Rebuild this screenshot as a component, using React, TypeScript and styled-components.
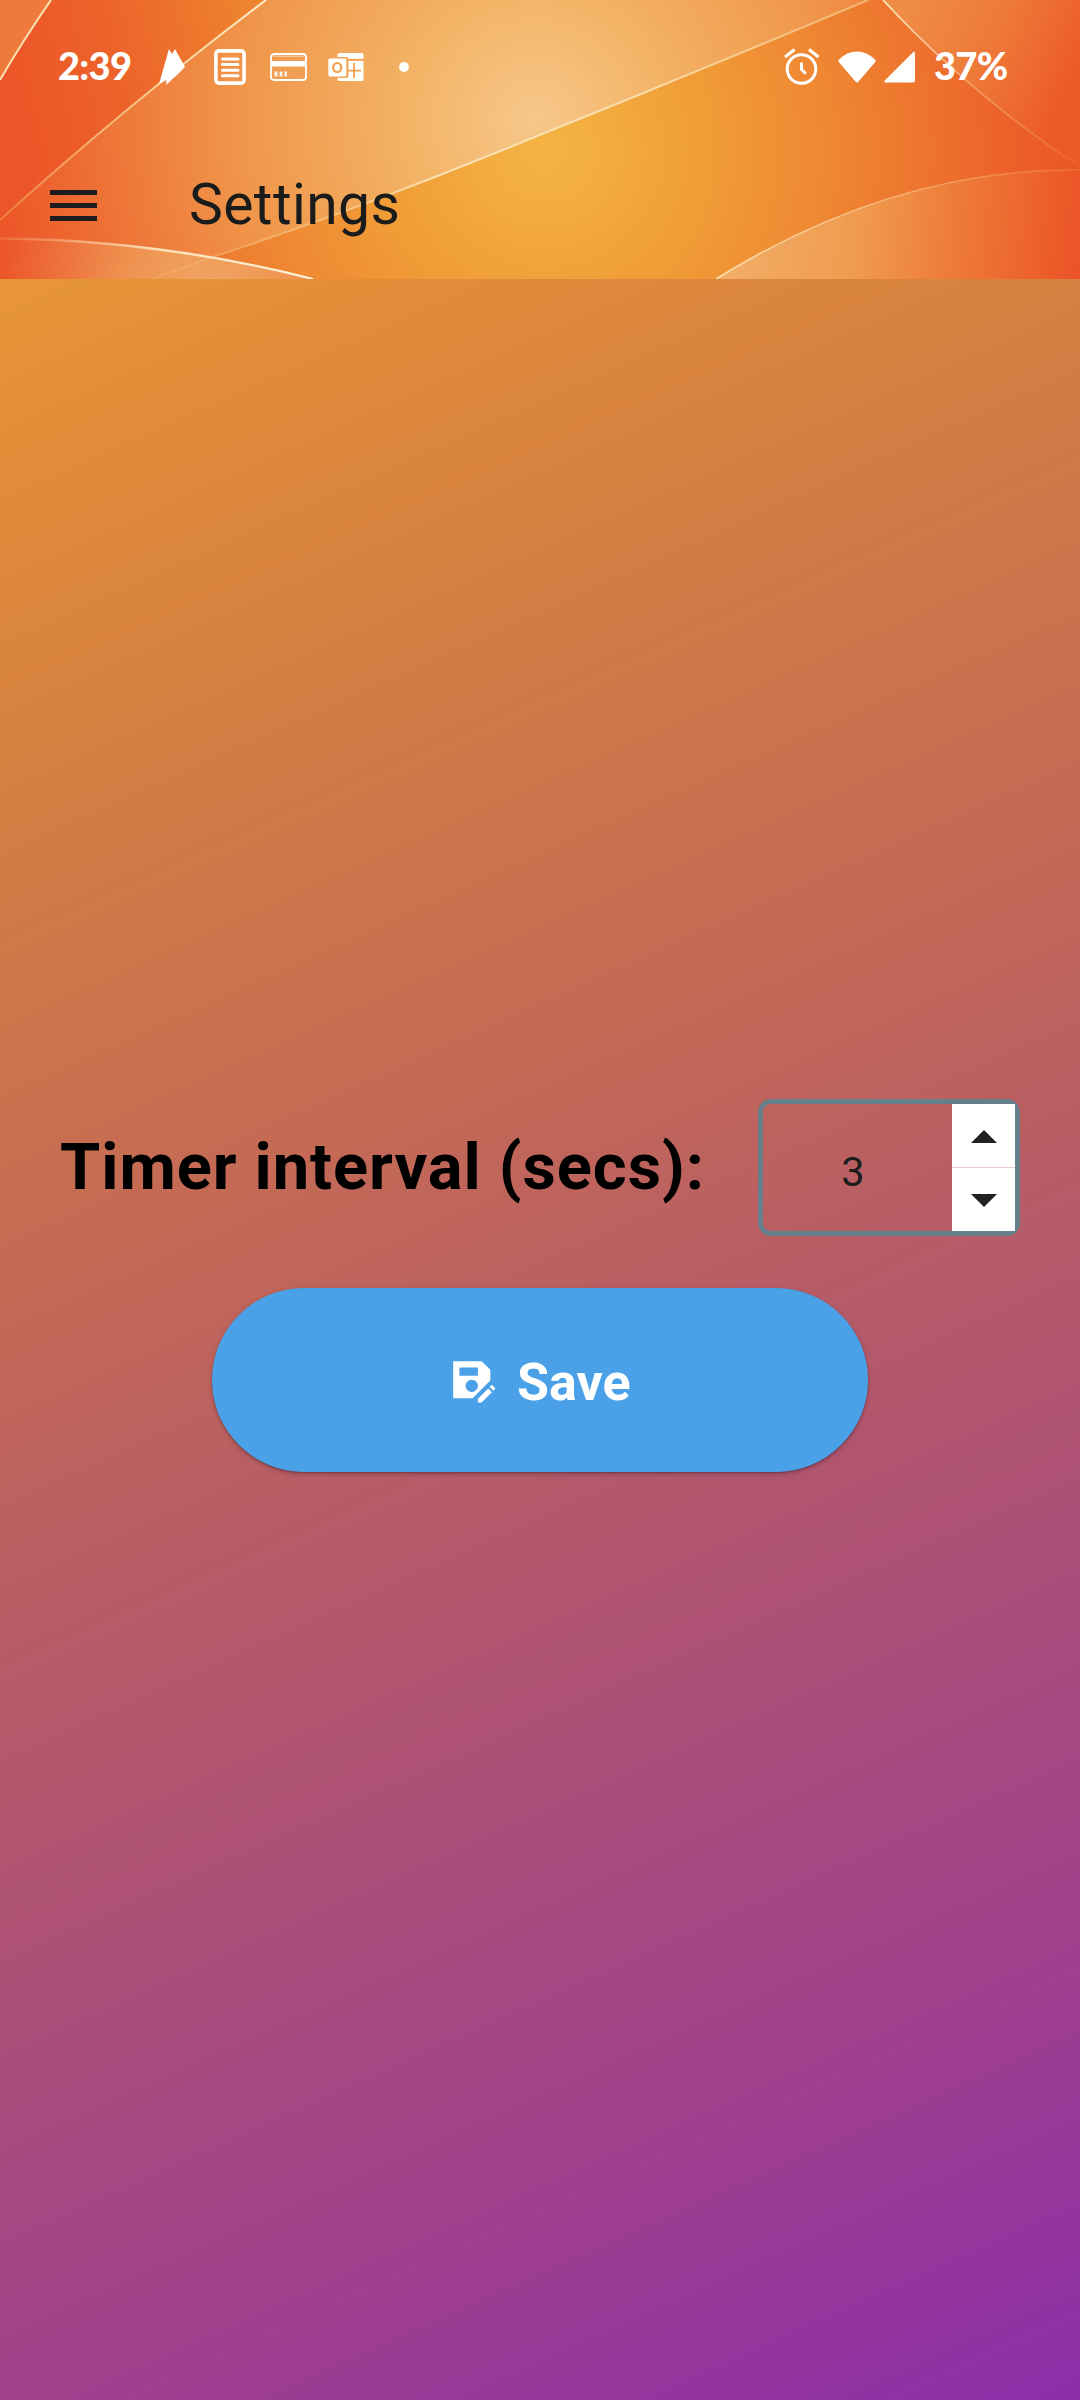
import React, { useState } from "react";
import styled, { createGlobalStyle } from "styled-components";

const GlobalStyle = createGlobalStyle`
  *, *::before, *::after { box-sizing: border-box; }
  html, body { margin: 0; padding: 0; }
  body { font-family: Roboto, "Noto Sans", sans-serif; }
`;

const Screen = styled.div`
  display: flex;
  flex-direction: column;
  width: 1080px;
  height: 2400px;
  overflow: hidden;
`;

const Header = styled.header`
  position: relative;
  flex: none;
  height: 279px;
  overflow: hidden;
  background: #ee7a30;
`;

const HeaderArt = styled.svg`
  position: absolute;
  inset: 0;
  display: block;
`;

const HeaderContent = styled.div`
  position: relative;
  display: flex;
  flex-direction: column;
  height: 100%;
`;

const StatusBar = styled.div`
  display: flex;
  align-items: center;
  justify-content: space-between;
  height: 133px;
  padding: 0 72px 0 58px;
  color: #fff;
`;

const StatusGroup = styled.div`
  display: flex;
  align-items: center;
`;

const StatusText = styled.span<{ $width: number }>`
  display: block;
  width: ${(p) => p.$width}px;
  margin-bottom: 3px;
  font-family: Lato, sans-serif;
  font-size: 38px;
  font-weight: 900;
  line-height: 46px;
  letter-spacing: -0.7px;
  white-space: nowrap;
`;

const Battery = styled.div`
  margin-left: 19px;
`;

const Glyph = styled.svg<{ $gap: number }>`
  display: block;
  flex: none;
  margin-left: ${(p) => p.$gap}px;
`;

const AppBar = styled.div`
  display: flex;
  align-items: center;
  flex: 1;
  padding: 0 50px;
`;

const MenuButton = styled.button`
  display: flex;
  flex-direction: column;
  justify-content: space-between;
  width: 47px;
  height: 31px;
  margin: 0 0 1px;
  padding: 0;
  border: 0;
  background: none;
`;

const MenuLine = styled.span`
  display: block;
  height: 5px;
  background: #1c1d1c;
`;

const Title = styled.h1`
  margin: 0 0 3px 92px;
  color: #1a1c1c;
  font-size: 57px;
  font-weight: 400;
  line-height: 66px;
  letter-spacing: 0.4px;
`;

const Body = styled.main`
  display: flex;
  flex: 1;
  flex-direction: column;
  align-items: center;
  padding-top: 820px;
  background: linear-gradient(
      155.77deg,
      #ee9c35 0%,
      #e89638 9.7%,
      #e08b39 17.5%,
      #d37d44 29%,
      #c46a55 44.5%,
      #b65b67 58%,
      #9f408d 84%,
      #8d2eaa 100%
    )
    0 100% / 1080px 2400px no-repeat;
`;

const FieldRow = styled.div`
  display: flex;
  align-items: center;
  justify-content: space-between;
  width: 100%;
  height: 137px;
  padding: 0 60px;
`;

const FieldLabel = styled.label`
  margin-bottom: 1px;
  color: #000;
  font-size: 65px;
  font-weight: 700;
  line-height: 76px;
  letter-spacing: 0.95px;
  white-space: nowrap;
`;

const Stepper = styled.div`
  display: flex;
  width: 262px;
  height: 137px;
  border: 5px solid #677f8b;
  border-radius: 13px;
`;

const StepperValue = styled.output`
  flex: 1;
  padding: 7px 9px 0 0;
  color: #1c1e1e;
  font-size: 41.5px;
  font-weight: 400;
  line-height: 121px;
  text-align: center;
`;

const StepperButtons = styled.div`
  display: grid;
  grid-template-rows: 1fr 1fr;
  gap: 1px;
  width: 63px;
  background: #e6cdd2;
`;

const StepButton = styled.button`
  display: flex;
  align-items: center;
  justify-content: center;
  padding: 1px 0 0;
  border: 0;
  background: #fff;
`;

const SaveButton = styled.button`
  display: flex;
  align-items: center;
  justify-content: center;
  width: 656px;
  height: 184px;
  margin-top: 52px;
  padding: 0 2px 0 0;
  border: 0;
  border-radius: 92px;
  background: #4aa1e8;
  box-shadow: 0 2px 4px rgba(0, 0, 0, 0.26), 0 1px 1px rgba(0, 0, 0, 0.16);
  color: #fff;
  font-family: Roboto, sans-serif;
  font-size: 52px;
  font-weight: 700;
  line-height: 60px;
`;

const SaveText = styled.span`
  margin: 6px 0 0 20px;
`;

const regionA = "M0 0H51Q22 42 0 80Z";
const regionBand = "M266 0Q126 106 0 220V239Q110 240 213 257L440 175Q654 90 868 0Z";
const lineC = "M152 279L213 257Q330 218 440 175Q654 90 868 0";
const regionE = "M0 238.500Q160 240 313 279H0Z";
const regionF = "M716 279Q895 168 1080 170V279Z";
const regionD = "M883 0Q970 94 1080 167V0Z";

function HeaderBackground() {
  return (
    <HeaderArt width="1080" height="279" viewBox="0 0 1080 279" aria-hidden="true">
      <defs>
        <radialGradient id="sun" gradientUnits="userSpaceOnUse" cx="545" cy="150" r="560">
          <stop offset="0" stopColor="#f4b444" />
          <stop offset="0.3" stopColor="#f09c37" />
          <stop offset="0.5" stopColor="#ef8833" />
          <stop offset="0.68" stopColor="#ed742e" />
          <stop offset="0.82" stopColor="#ec6229" />
          <stop offset="0.95" stopColor="#eb5627" />
        </radialGradient>
        <radialGradient id="band" gradientUnits="userSpaceOnUse" cx="535" cy="120" r="540">
          <stop offset="0" stopColor="#f6c78a" />
          <stop offset="0.25" stopColor="#f3b264" />
          <stop offset="0.55" stopColor="#f0964a" />
          <stop offset="0.78" stopColor="#ee7638" />
          <stop offset="1" stopColor="#ec5628" />
        </radialGradient>
        <linearGradient id="left" gradientUnits="userSpaceOnUse" x1="0" y1="60" x2="250" y2="0">
          <stop offset="0" stopColor="#ec5528" />
          <stop offset="0.45" stopColor="#ec642a" />
          <stop offset="1" stopColor="#ee842f" />
        </linearGradient>
        <radialGradient id="low" gradientUnits="userSpaceOnUse" cx="210" cy="290" r="210">
          <stop offset="0" stopColor="#f1a562" />
          <stop offset="0.4" stopColor="#ef9351" />
          <stop offset="1" stopColor="#ec5628" />
        </radialGradient>
        <linearGradient id="right" gradientUnits="userSpaceOnUse" x1="730" y1="260" x2="1075" y2="290">
          <stop offset="0" stopColor="#f2ad66" />
          <stop offset="0.35" stopColor="#f09c50" />
          <stop offset="0.65" stopColor="#ee7a37" />
          <stop offset="1" stopColor="#eb5427" />
        </linearGradient>
        <linearGradient id="corner" gradientUnits="userSpaceOnUse" x1="910" y1="0" x2="1075" y2="80">
          <stop offset="0" stopColor="#ef8c45" />
          <stop offset="0.5" stopColor="#ee7938" />
          <stop offset="1" stopColor="#ec5a29" />
        </linearGradient>
        <linearGradient id="glowC" gradientUnits="userSpaceOnUse" x1="152" y1="0" x2="868" y2="0">
          <stop offset="0" stopColor="#f4b168" stopOpacity="0.4" />
          <stop offset="0.4" stopColor="#fae0b0" />
          <stop offset="0.65" stopColor="#fae0b0" />
          <stop offset="1" stopColor="#f3b56e" />
        </linearGradient>
        <linearGradient id="glowB" gradientUnits="userSpaceOnUse" x1="0" y1="220" x2="266" y2="0">
          <stop offset="0" stopColor="#ef8040" />
          <stop offset="0.6" stopColor="#f7cf90" />
          <stop offset="1" stopColor="#fdf0cc" />
        </linearGradient>
        <linearGradient id="glowE" gradientUnits="userSpaceOnUse" x1="0" y1="0" x2="313" y2="0">
          <stop offset="0" stopColor="#ee6a35" />
          <stop offset="0.5" stopColor="#fbe0b5" />
          <stop offset="1" stopColor="#fef4dc" />
        </linearGradient>
        <linearGradient id="glowF" gradientUnits="userSpaceOnUse" x1="716" y1="0" x2="1080" y2="0">
          <stop offset="0" stopColor="#fae0b0" />
          <stop offset="0.5" stopColor="#f4b070" />
          <stop offset="1" stopColor="#ed6a30" />
        </linearGradient>
        <linearGradient id="glowD" gradientUnits="userSpaceOnUse" x1="883" y1="0" x2="1080" y2="165">
          <stop offset="0" stopColor="#fce8c0" />
          <stop offset="0.45" stopColor="#f2a268" />
          <stop offset="1" stopColor="#ec5e2a" />
        </linearGradient>
      </defs>
      <rect width="1080" height="279" fill="url(#sun)" />
      <path d="M0 0H266L0 220Z" fill="url(#left)" />
      <path d={regionA} fill="#ee7b3b" />
      <path d={regionBand} fill="url(#band)" />
      <path d={regionE} fill="url(#low)" />
      <path d={regionF} fill="url(#right)" />
      <path d={regionD} fill="url(#corner)" />
      <g fill="none" strokeWidth="2">
        <path d="M51 0Q22 42 0 80" stroke="#fbe2b4" />
        <path d="M266 0Q126 106 0 220" stroke="url(#glowB)" />
        <path d={lineC} stroke="url(#glowC)" />
        <path d="M883 0Q970 94 1080 167" stroke="url(#glowD)" strokeWidth="1.800" />
        <path d="M0 238.500Q160 240 313 279" stroke="url(#glowE)" strokeWidth="2.300" />
        <path d="M716 279Q895 168 1080 170" stroke="url(#glowF)" strokeWidth="1.700" />
      </g>
    </HeaderArt>
  );
}

function NotificationIcons() {
  return (
    <>
      <Glyph $gap={28} width="26" height="36" viewBox="0 0 26 36" fill="#fff">
        <path d="M10 0L13 5L16 0L26 18L19 25L7 36L7.500 31L0 35Z" />
      </Glyph>
      <Glyph $gap={29} width="32" height="36" viewBox="0 0 32 36" fill="none" stroke="#fff">
        <rect x="1.900" y="1.900" width="28.200" height="32.200" rx="3" strokeWidth="3.600" />
        <path d="M8.500 10H24M8.500 15.600H24M8.500 21.200H24M8.500 26.800H24" strokeWidth="3" strokeLinecap="round" />
      </Glyph>
      <Glyph $gap={24} width="37" height="28" viewBox="0 0 37 28">
        <rect x="1" y="1" width="35" height="26" rx="3" fill="none" stroke="#fff" strokeWidth="1.800" />
        <path d="M3 3.200H34" stroke="#fff" strokeOpacity="0.5" strokeWidth="1.200" />
        <path d="M1 8H36V13.500H1Z" fill="#fff" />
        <path d="M4.500 18.500H7.500V23.500H4.500ZM9.500 18.500H12.500V23.500H9.500ZM14.500 18.500H17V23.500H14.500Z" fill="#fff" fillOpacity="0.9" />
      </Glyph>
      <Glyph $gap={21} width="36" height="30" viewBox="0 0 36 30">
        <path d="M11 1H34Q35.500 1 35.500 2.500V6.800H20.500Q20 5 18 5H9.500V2.500Q9.500 1 11 1Z" fill="#fff" />
        <path d="M20.500 9H35.500V27.500Q35.500 29 34 29H11Q9.500 29 9.500 27.500V26H18Q20.500 26 20.500 23.500Z" fill="#fff" />
        <rect x="0.300" y="6.500" width="18" height="18" rx="1.500" fill="#fff" />
        <ellipse cx="9.200" cy="15.500" rx="4" ry="4.500" fill="none" stroke="#f1a04c" strokeWidth="2.200" />
        <path d="M26 11V26M19.500 18.700H33" stroke="#f1a04c" strokeWidth="1.800" />
      </Glyph>
      <Glyph $gap={35} width="10" height="10" viewBox="0 0 10 10" fill="#fff">
        <circle cx="5" cy="5" r="5" />
      </Glyph>
    </>
  );
}

function SystemIcons() {
  return (
    <>
      <Glyph $gap={0} width="36" height="37" viewBox="0 0 36 37" fill="none" stroke="#fff" strokeWidth="3">
        <circle cx="17.500" cy="21" r="14.300" />
        <path d="M1 9L10.500 1.500M25 1.500L34.500 9" />
        <path d="M17.500 14.500V21.500L21.800 25.800" />
      </Glyph>
      <Glyph $gap={18} width="38" height="32" viewBox="0 0 38 32" fill="#fff">
        <path d="M0.700 11Q-0.200 9.800 1 8.600Q9 0.500 19 0.500T37 8.600Q38.200 9.800 37.300 11L20.300 30.800Q19 32.300 17.700 30.800Z" />
      </Glyph>
      <Glyph $gap={8} width="31" height="32" viewBox="0 0 31 32" fill="#fff">
        <path d="M29.600 0.700Q31 0.200 31 2V29.500Q31 31.500 29 31.500H1.500Q-0.500 31.200 0.800 29.600Z" />
      </Glyph>
    </>
  );
}

function SaveAsIcon() {
  return (
    <svg width="49.500" height="49.500" viewBox="0 0 24 24" fill="#fff" aria-hidden="true">
      <path
        fillRule="evenodd"
        d="M21 12.400V7.200L16.800 3H3V21H12.400ZM15 15A3 3 0 1 1 9 15A3 3 0 1 1 15 15ZM6 6H15V10H6Z"
      />
      <path d="M19.990 16.250L21.760 18.020L16.770 23H15V21.230ZM23.500 16.250L22.470 17.310L20.690 15.540L21.750 14.480Z" />
    </svg>
  );
}

export default function App() {
  const [seconds, setSeconds] = useState(3);
  return (
    <>
      <GlobalStyle />
      <Screen>
        <Header>
          <HeaderBackground />
          <HeaderContent>
            <StatusBar>
              <StatusGroup>
                <StatusText $width={73}>2:39</StatusText>
                <NotificationIcons />
              </StatusGroup>
              <StatusGroup>
                <SystemIcons />
                <Battery>
                  <StatusText $width={74}>37%</StatusText>
                </Battery>
              </StatusGroup>
            </StatusBar>
            <AppBar>
              <MenuButton aria-label="Open menu">
                <MenuLine />
                <MenuLine />
                <MenuLine />
              </MenuButton>
              <Title>Settings</Title>
            </AppBar>
          </HeaderContent>
        </Header>
        <Body>
          <FieldRow>
            <FieldLabel>Timer interval (secs):</FieldLabel>
            <Stepper>
              <StepperValue>{seconds}</StepperValue>
              <StepperButtons>
                <StepButton aria-label="Increase" onClick={() => setSeconds((s) => s + 1)}>
                  <svg width="26" height="13" viewBox="0 0 26 13" fill="#212121">
                    <path d="M0 13L13 0L26 13Z" />
                  </svg>
                </StepButton>
                <StepButton aria-label="Decrease" onClick={() => setSeconds((s) => Math.max(1, s - 1))}>
                  <svg width="26" height="13" viewBox="0 0 26 13" fill="#212121">
                    <path d="M0 0L13 13L26 0Z" />
                  </svg>
                </StepButton>
              </StepperButtons>
            </Stepper>
          </FieldRow>
          <SaveButton>
            <SaveAsIcon />
            <SaveText>Save</SaveText>
          </SaveButton>
        </Body>
      </Screen>
    </>
  );
}
